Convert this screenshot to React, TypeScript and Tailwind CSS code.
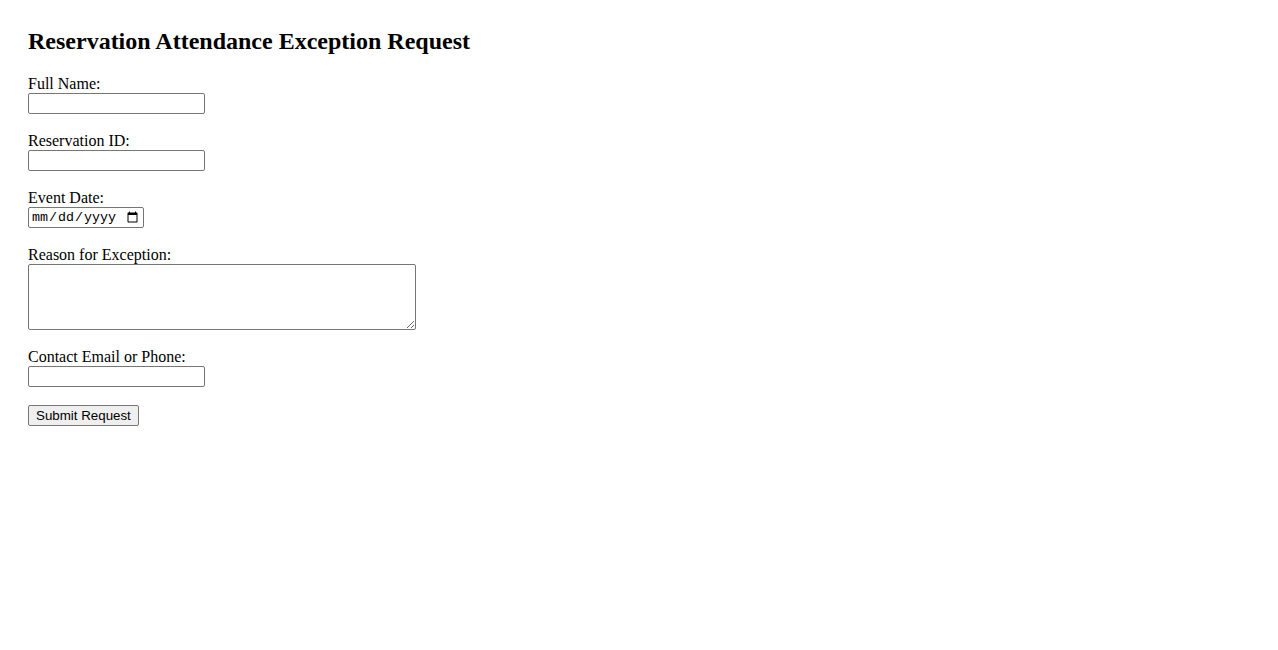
import React from 'react';

// plain browser-default looking form
const inputCls =
  "h-[21px] w-[177px] border border-[#767676] rounded-[2px] bg-white px-[2px] py-[1px] font-['Liberation_Sans',Arial,sans-serif] text-[13.33px] outline-none";

const Field: React.FC<{ label: string; children: React.ReactNode }> = ({ label, children }) => (
  <div className="mb-[18px] flex flex-col items-start">
    <label className="leading-[18px]">{label}</label>
    {children}
  </div>
);

export default function App() {
  return (
    <div className="min-h-[650px] bg-white p-7 font-['Liberation_Serif','Times_New_Roman',serif] text-base text-black">
      <h2 className="mb-5 text-2xl leading-[27px] font-bold">Reservation Attendance Exception Request</h2>
      <form onSubmit={(e) => e.preventDefault()}>
        <Field label="Full Name:">
          <input type="text" className={inputCls} />
        </Field>
        <Field label="Reservation ID:">
          <input type="text" className={inputCls} />
        </Field>
        <Field label="Event Date:">
          <input
            type="date"
            className="h-[21px] w-[116px] border border-[#767676] rounded-[2px] bg-white px-[2px] py-[1px] font-['Liberation_Mono',monospace] text-[13.33px] outline-none"
          />
        </Field>
        <Field label="Reason for Exception:">
          <textarea className="block h-[66px] w-[388px] resize border border-[#767676] rounded-[2px] bg-white px-[2px] py-[2px] font-['Liberation_Mono',monospace] text-[13.33px] outline-none" />
        </Field>
        <Field label="Contact Email or Phone:">
          <input type="text" className={inputCls} />
        </Field>
        <button
          type="submit"
          className="block h-[21px] border border-[#767676] rounded-[2px] bg-[#efefef] px-[7px] font-['Liberation_Sans',Arial,sans-serif] text-[13.33px] leading-[17px] text-black"
        >
          Submit Request
        </button>
      </form>
    </div>
  );
}
